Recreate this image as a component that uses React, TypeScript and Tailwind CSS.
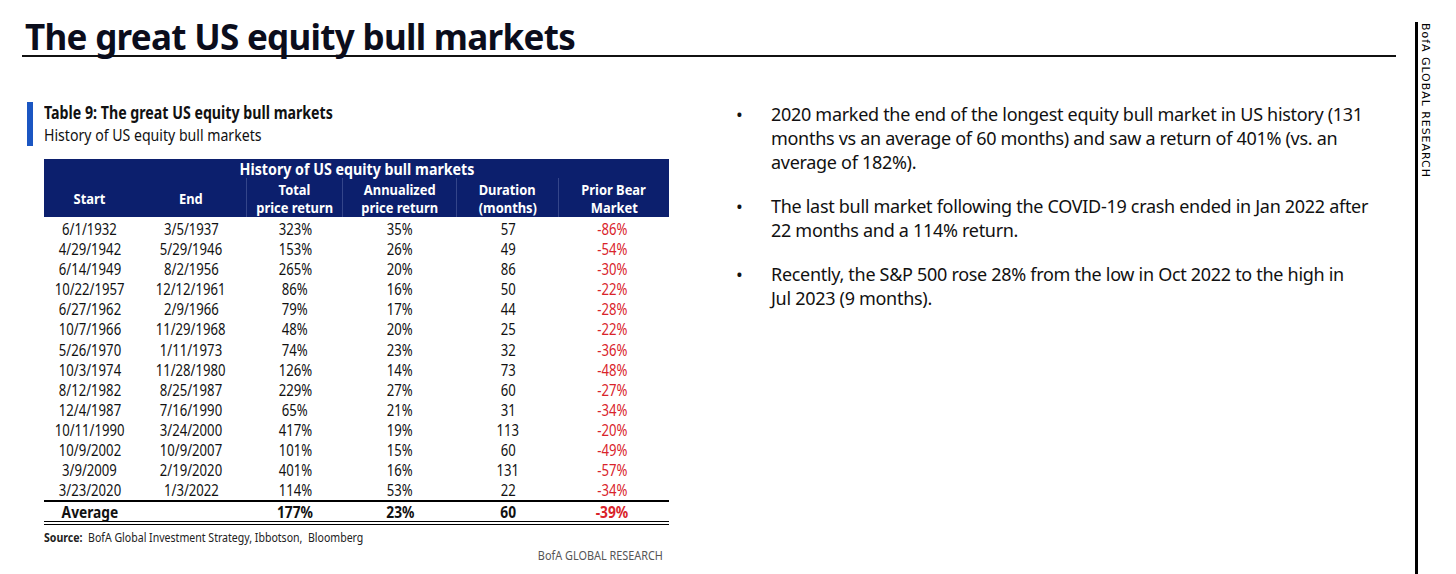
import React from "react";

type Row = [string, string, string, string, string, string];

const rows: Row[] = [
  ["6/1/1932", "3/5/1937", "323%", "35%", "57", "-86%"],
  ["4/29/1942", "5/29/1946", "153%", "26%", "49", "-54%"],
  ["6/14/1949", "8/2/1956", "265%", "20%", "86", "-30%"],
  ["10/22/1957", "12/12/1961", "86%", "16%", "50", "-22%"],
  ["6/27/1962", "2/9/1966", "79%", "17%", "44", "-28%"],
  ["10/7/1966", "11/29/1968", "48%", "20%", "25", "-22%"],
  ["5/26/1970", "1/11/1973", "74%", "23%", "32", "-36%"],
  ["10/3/1974", "11/28/1980", "126%", "14%", "73", "-48%"],
  ["8/12/1982", "8/25/1987", "229%", "27%", "60", "-27%"],
  ["12/4/1987", "7/16/1990", "65%", "21%", "31", "-34%"],
  ["10/11/1990", "3/24/2000", "417%", "19%", "113", "-20%"],
  ["10/9/2002", "10/9/2007", "101%", "15%", "60", "-49%"],
  ["3/9/2009", "2/19/2020", "401%", "16%", "131", "-57%"],
  ["3/23/2020", "1/3/2022", "114%", "53%", "22", "-34%"],
];

const cols = "grid grid-cols-[91px_112px_96px_114px_102px_110px]";

// narrow the glyphs, the report uses a condensed face
function N({ children, s = "scale-x-[0.82]" }: { children: React.ReactNode; s?: string }) {
  return <span className={`inline-block whitespace-nowrap ${s}`}>{children}</span>;
}

function HeadCell({ a, b, sep = true }: { a: string; b?: string; sep?: boolean }) {
  return (
    <div className={`flex flex-col items-center justify-center ${sep ? "border-r border-[#34458a]" : ""}`}>
      <N s="scale-x-[0.86]">{a}</N>
      {b && <N s="scale-x-[0.86]">{b}</N>}
    </div>
  );
}

function BullTable() {
  return (
    <div className="w-[625px] font-['Noto_Sans',sans-serif] text-[#111]">
      <div className="bg-[#0c1f6d] text-white">
        <div className="h-[19px] flex items-center justify-center text-[16px] font-bold leading-none">
          <N s="scale-x-[0.89]">History of US equity bull markets</N>
        </div>
        <div className={`${cols} h-[39px] text-[15px] font-bold leading-[18px]`}>
          <HeadCell a="Start" sep={false} />
          <HeadCell a="End" />
          <HeadCell a="Total" b="price return" />
          <HeadCell a="Annualized" b="price return" />
          <HeadCell a="Duration" b="(months)" />
          <HeadCell a="Prior Bear" b="Market" sep={false} />
        </div>
      </div>
      <div className="pt-[2px] border-b-2 border-black">
        {rows.map((r) => (
          <div key={r[0]} className={`${cols} h-[20.1px] text-[16px] leading-[20px] text-center`}>
            <div><N>{r[0]}</N></div>
            <div><N>{r[1]}</N></div>
            <div><N>{r[2]}</N></div>
            <div><N>{r[3]}</N></div>
            <div><N>{r[4]}</N></div>
            <div className="pr-[4px] text-[#d9232a]"><N>{r[5]}</N></div>
          </div>
        ))}
      </div>
      <div className={`${cols} h-[23px] text-[16px] font-bold leading-[20px] text-center border-b-4 border-double border-black`}>
        <div><N s="scale-x-[0.86]">Average</N></div>
        <div />
        <div><N s="scale-x-[0.86]">177%</N></div>
        <div><N s="scale-x-[0.86]">23%</N></div>
        <div><N s="scale-x-[0.86]">60</N></div>
        <div className="pr-[4px] text-[#d9232a]"><N s="scale-x-[0.86]">-39%</N></div>
      </div>
      <div className="mt-[5px] text-[12.5px] leading-[16px] text-[#222] whitespace-nowrap origin-left scale-x-[0.845]">
        <span className="font-bold">Source:</span>&nbsp; BofA Global Investment Strategy, Ibbotson,&nbsp; Bloomberg
      </div>
      <div className="mt-[2px] pr-[7px] text-right text-[12.5px] leading-[16px] text-[#555] whitespace-nowrap origin-right scale-x-[0.87]">
        BofA GLOBAL RESEARCH
      </div>
    </div>
  );
}

const bullets = [
  [
    "2020 marked the end of the longest equity bull market in US history (131",
    "months vs an average of 60 months) and saw a return of 401% (vs. an",
    "average of 182%).",
  ],
  ["The last bull market following the COVID-19 crash ended in Jan 2022 after", "22 months and a 114% return."],
  ["Recently, the S&P 500 rose 28% from the low in Oct 2022 to the high in", "Jul 2023 (9 months)."],
];

export default function App() {
  return (
    <div className="w-[1456px] h-[574px] bg-white flex overflow-hidden">
      <div className="ml-[22px] w-[1374px] flex flex-col">
        <h1 className="pt-[19px] pb-[1px] pl-[3px] border-b-2 border-[#111] text-[35px] leading-[35px] font-bold tracking-[-0.7px] text-[#0b0d1c] font-['Noto_Sans',sans-serif]">
          The great US equity bull markets
        </h1>
        <div className="flex items-start">
          <div className="mt-[45px] ml-[5px] flex flex-col">
            <div className="flex">
              <div className="w-[6px] h-[44px] bg-[#1b56c2]" />
              <div className="ml-[11px] font-['Noto_Sans',sans-serif] text-[#111]">
                <div className="text-[17px] leading-[22px] font-bold whitespace-nowrap origin-left scale-x-[0.835]">
                  Table 9: The great US equity bull markets
                </div>
                <div className="text-[17px] leading-[22px] whitespace-nowrap origin-left scale-x-[0.83]">
                  History of US equity bull markets
                </div>
              </div>
            </div>
            <div className="ml-[17px] mt-[13px]">
              <BullTable />
            </div>
          </div>
          <div className="ml-[67px] mt-[45px] flex flex-col gap-[20px] font-['Noto_Sans',sans-serif] text-[18px] leading-[24px] tracking-[-0.3px] text-[#111]">
            {bullets.map((b) => (
              <div key={b[0]} className="flex">
                <span className="w-[35px] shrink-0">•</span>
                <p>
                  {b.map((line) => (
                    <span key={line} className="block whitespace-nowrap">
                      {line}
                    </span>
                  ))}
                </p>
              </div>
            ))}
          </div>
        </div>
      </div>
      <div className="ml-[19px] mt-[22px] border-l-[3px] border-black h-[552px]">
        <div className="[writing-mode:vertical-rl] pl-[1px] pt-[1px] text-[11px] leading-[12px] tracking-[0.95px] font-['DejaVu_Sans',sans-serif] text-black">
          BofA GLOBAL RESEARCH
        </div>
      </div>
    </div>
  );
}
